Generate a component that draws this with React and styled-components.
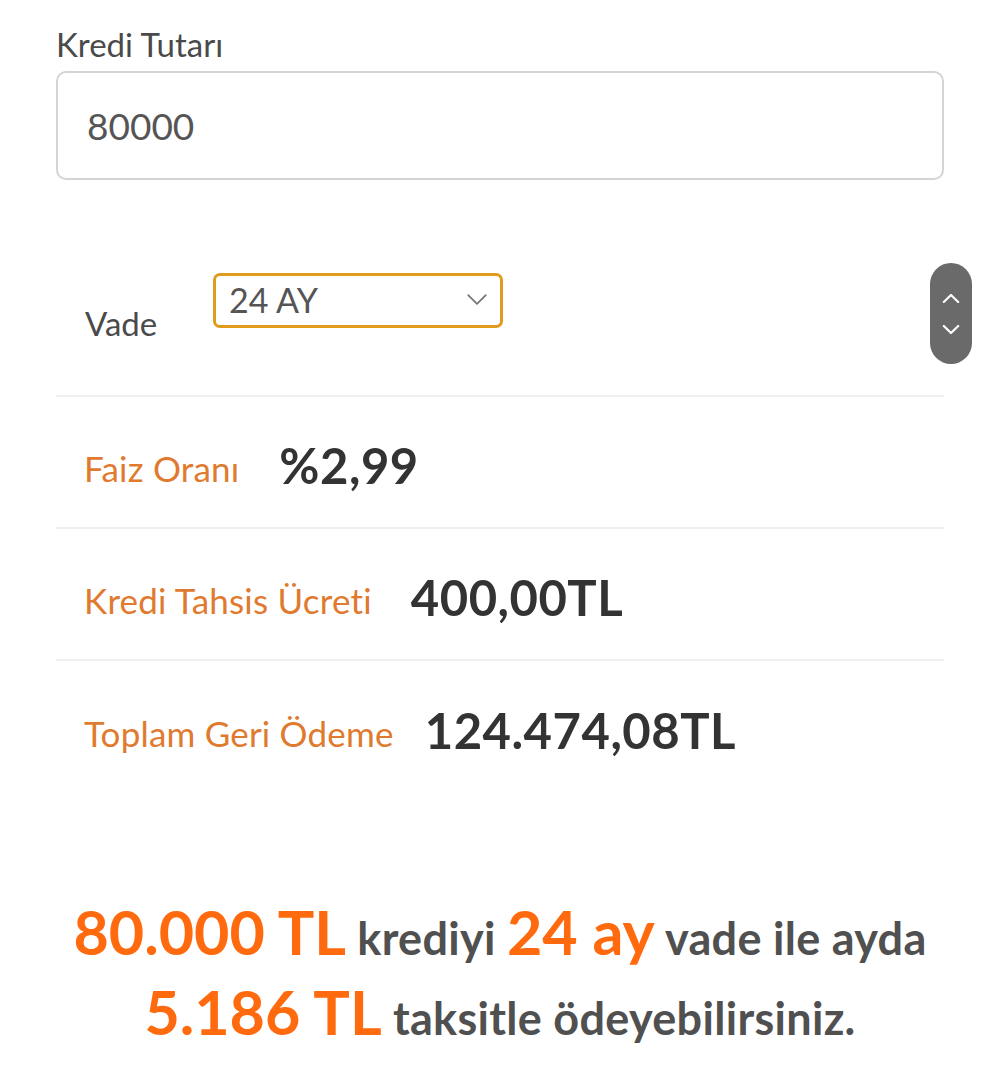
import React from "react";
import styled, { createGlobalStyle } from "styled-components";

const GlobalStyle = createGlobalStyle`
  body {
    margin: 0;
    background: #ffffff;
    font-family: "Lato", "Noto Sans", sans-serif;
  }
`;

const Page = styled.div`
  width: 1000px;
  height: 1073px;
  padding: 22px 56px 0 56px;
  box-sizing: border-box;
  overflow: hidden;
`;

const FieldLabel = styled.div`
  font-size: 33px;
  color: #4a4a4a;
  line-height: 44px;
`;

const AmountBox = styled.div`
  margin-top: 5px;
  height: 109px;
  border: 2px solid #d4d4d4;
  border-radius: 10px;
  box-sizing: border-box;
  display: flex;
  align-items: center;
  padding-left: 29px;
  font-size: 37px;
  color: #555;
`;

const VadeRow = styled.div`
  margin-top: 83px;
  display: flex;
  align-items: flex-start;
  height: 132px;
  border-bottom: 2px solid #efefef;
`;

const VadeLabel = styled.div`
  font-size: 33px;
  color: #4a4a4a;
  margin: 40px 0 0 29px;
  width: 128px;
`;

const Select = styled.div`
  margin-top: 10px;
  width: 290px;
  height: 55px;
  box-sizing: border-box;
  border: 3px solid #e09a1c;
  border-radius: 7px;
  display: flex;
  align-items: center;
  justify-content: space-between;
  padding: 0 12px 2px 13px;
  font-size: 34px;
  color: #555;
`;

const Stepper = styled.div`
  margin-left: auto;
  margin-right: -28px;
  width: 42px;
  height: 101px;
  border-radius: 21px;
  background: #6a6a6a;
  display: flex;
  flex-direction: column;
  align-items: center;
  justify-content: center;
  gap: 22px;
`;

const InfoRow = styled.div`
  height: 132px;
  display: flex;
  align-items: center;
  padding: 12px 0 0 28px;
  box-sizing: border-box;
  border-bottom: ${p => (p.$last ? "none" : "2px solid #efefef")};
`;

const InfoLabel = styled.span`
  font-size: 35px;
  letter-spacing: 0.2px;
  color: #e07a2e;
  margin-right: ${p => p.$gap}px;
`;

const InfoValue = styled.span`
  font-size: 49px;
  font-weight: 700;
  letter-spacing: 0.5px;
  color: #333;
  margin-top: -6px;
`;

const Summary = styled.div`
  margin-top: 102px;
  text-align: center;
  color: #505050;
  font-weight: 700;
  font-size: 45px;
  letter-spacing: 0.3px;
  line-height: 73px;
`;

const Big = styled.span`
  color: #ff6a0e;
  font-size: 61px;
  letter-spacing: 0;
`;

const Chevron = ({ up, size = 20, color = "#777", width = 2 }) => (
  <svg width={size} height={size / 2} viewBox="0 0 20 10">
    <path
      d={up ? "M2 9 L10 1 L18 9" : "M2 1 L10 9 L18 1"}
      fill="none"
      stroke={color}
      strokeWidth={width}
      strokeLinecap="round"
      strokeLinejoin="round"
    />
  </svg>
);

export default function App() {
  return (
    <Page>
      <GlobalStyle />
      <FieldLabel>Kredi Tutarı</FieldLabel>
      <AmountBox>80000</AmountBox>

      <VadeRow>
        <VadeLabel>Vade</VadeLabel>
        <Select>
          <span>24 AY</span>
          <Chevron size={22} color="#777" width={1.6} />
        </Select>
        <Stepper>
          <Chevron up size={18} color="#fff" width={2.4} />
          <Chevron size={18} color="#fff" width={2.4} />
        </Stepper>
      </VadeRow>

      <InfoRow>
        <InfoLabel $gap={40}>Faiz Oranı</InfoLabel>
        <InfoValue>%2,99</InfoValue>
      </InfoRow>
      <InfoRow>
        <InfoLabel $gap={39}>Kredi Tahsis Ücreti</InfoLabel>
        <InfoValue>400,00TL</InfoValue>
      </InfoRow>
      <InfoRow $last>
        <InfoLabel $gap={31}>Toplam Geri Ödeme</InfoLabel>
        <InfoValue>124.474,08TL</InfoValue>
      </InfoRow>

      <Summary>
        <div>
          <Big>80.000 TL</Big> krediyi <Big>24 ay</Big> vade ile ayda
        </div>
        <div>
          <Big>5.186 TL</Big> taksitle ödeyebilirsiniz.
        </div>
      </Summary>
    </Page>
  );
}
